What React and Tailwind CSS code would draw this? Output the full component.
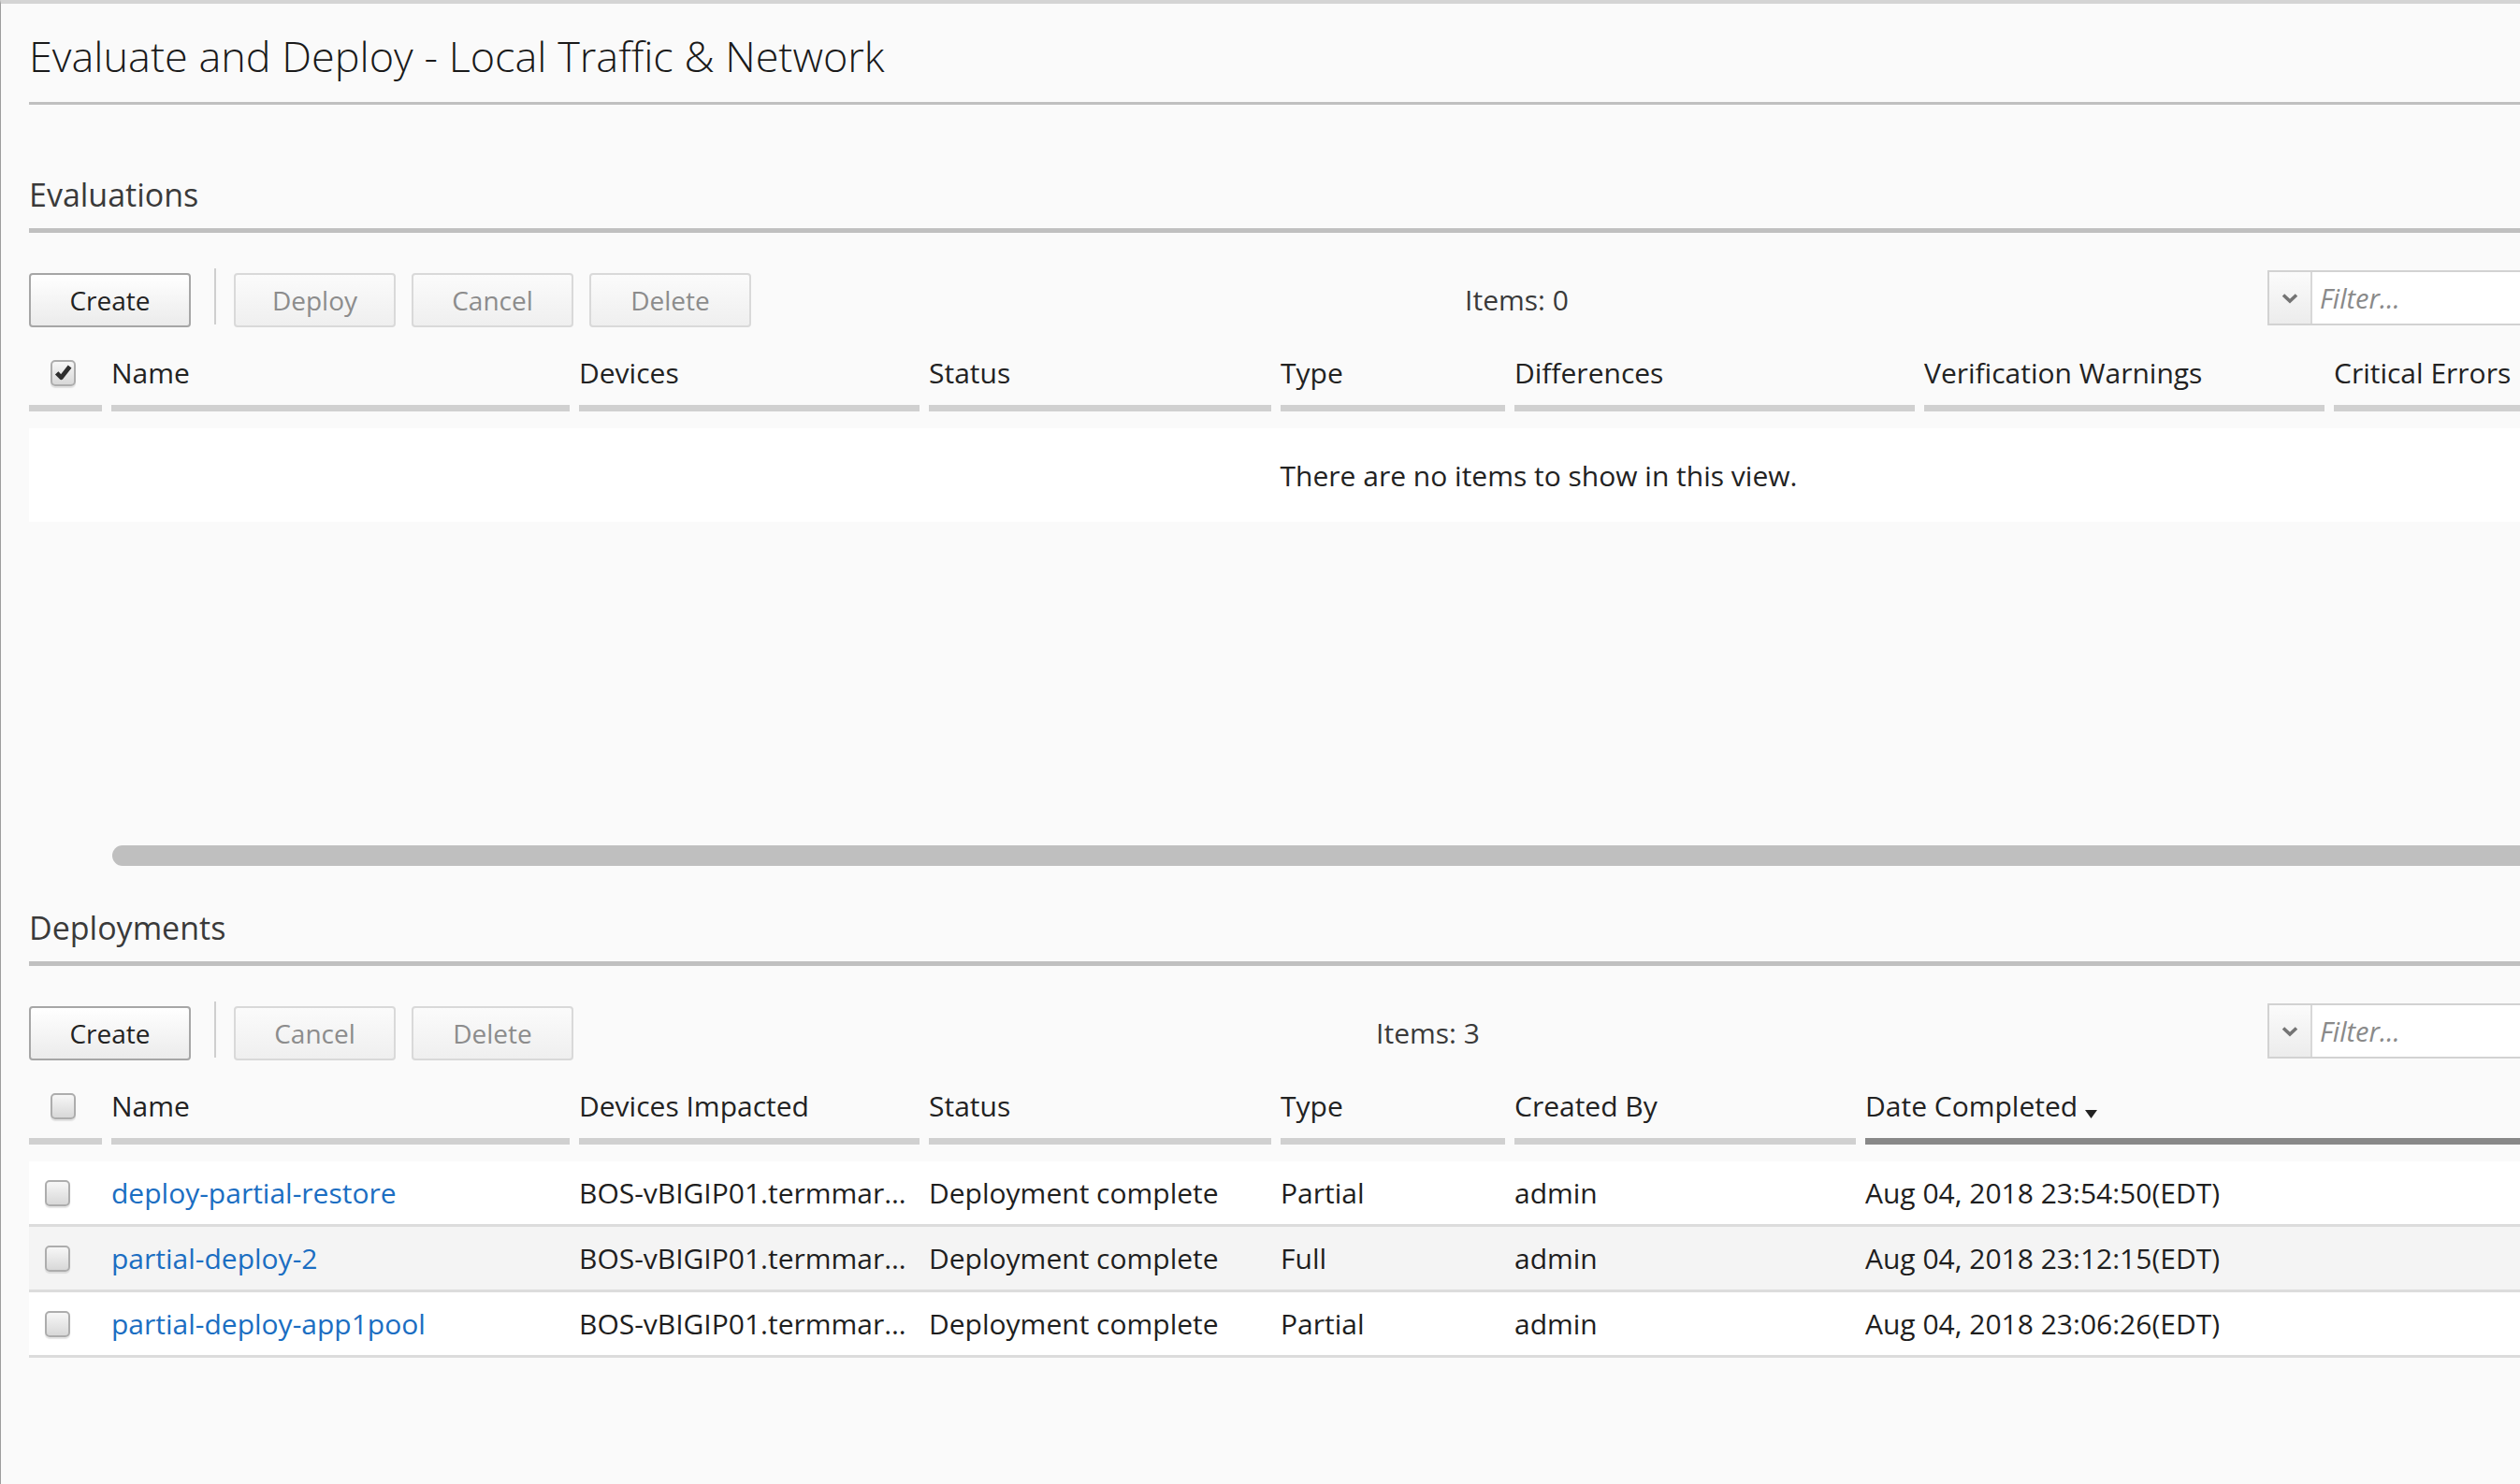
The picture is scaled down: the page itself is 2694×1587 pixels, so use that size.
import React from "react";

function Checkbox({ checked = false }) {
  return (
    <span className="relative block w-[27px] h-[28px] rounded-[5px] border-2 border-[#adadad] bg-gradient-to-b from-[#f7f7f7] to-[#d8d8d8] shadow-[0_2px_1px_rgba(0,0,0,0.10)]">
      {checked && (
        <svg viewBox="0 0 16 16" className="absolute left-[1px] top-[1px] w-[21px] h-[21px]">
          <path d="M2.8 8.2 L6.4 12 L13.4 3" fill="none" stroke="#2e2e2e" strokeWidth="3.6" strokeLinejoin="round" />
        </svg>
      )}
    </span>
  );
}

function Button({ label, disabled }) {
  return (
    <button
      className={
        disabled
          ? "mt-[5px] w-[173px] h-[58px] rounded-[4px] border-2 border-[#d9d9d9] bg-gradient-to-b from-[#fbfbfb] to-[#efefef] text-[28px] leading-none text-[#8c8c8c]"
          : "mt-[5px] w-[173px] h-[58px] rounded-[4px] border-2 border-[#a6a6a6] bg-gradient-to-b from-white to-[#ebebeb] text-[28px] leading-none text-[#222]"
      }
    >
      {label}
    </button>
  );
}

function Toolbar({ buttons, count }) {
  const [first, ...rest] = buttons;
  return (
    <div className="mt-[38px] flex items-start">
      <Button label={first} />
      <div className="ml-[25px] w-[2px] h-[60px] bg-[#cfcfcf]" />
      <div className="ml-[19px] flex gap-[17px]">
        {rest.map((b) => (
          <Button key={b} label={b} disabled />
        ))}
      </div>
      <div className="flex-1 mt-[5px] h-[58px] pl-[16px] flex items-center justify-center text-[30px] leading-none text-[#3a3a3a]">
        Items: {count}
      </div>
      <div className="mt-[2px] w-[835px] h-[59px] border-2 border-[#d2d2d2] flex bg-white">
        <div className="w-[46px] h-full border-r-2 border-[#d8d8d8] bg-gradient-to-b from-[#fbfbfb] to-[#ececec] flex items-center justify-center">
          <svg viewBox="0 0 18 12" className="w-[18px] h-[12px]">
            <path d="M2 2.5 L9 9 L16 2.5" fill="none" stroke="#747474" strokeWidth="3.6" />
          </svg>
        </div>
        <div className="flex-1 flex items-center pl-[8px] text-[29px] italic text-[#8a8a8a]">Filter...</div>
      </div>
    </div>
  );
}

const headCell =
  "h-[90px] pt-[15px] border-b-[7px] border-[#d0d0d0] flex items-center text-[30px] leading-none text-[#222] whitespace-nowrap";

function SectionTitle({ children, top }) {
  return (
    <h2
      className={`${top} pb-[13px] border-b-[5px] border-[#c0c0c0] text-[34px] leading-[46px] text-[#3a3a3a]`}
    >
      {children}
    </h2>
  );
}

const deployments = [
  { name: "deploy-partial-restore", type: "Partial", date: "Aug 04, 2018 23:54:50(EDT)", shade: "bg-white" },
  { name: "partial-deploy-2", type: "Full", date: "Aug 04, 2018 23:12:15(EDT)", shade: "bg-[#f4f4f4]" },
  { name: "partial-deploy-app1pool", type: "Partial", date: "Aug 04, 2018 23:06:26(EDT)", shade: "bg-white" },
];

export default function App() {
  const evalCols = "grid grid-cols-[78px_490px_364px_366px_240px_428px_428px_764px] gap-x-[10px]";
  const depCols = "grid grid-cols-[78px_490px_364px_366px_240px_365px_1265px] gap-x-[10px]";
  const rowCell = "flex items-center text-[30px] leading-none text-[#1e1e1e] whitespace-nowrap";

  return (
    <div className="w-[2694px] h-[1587px] overflow-hidden bg-[#fafafa] border-t-4 border-t-[#d4d4d4] border-l border-l-[#9d9d9d] font-['Open_Sans',sans-serif]">
      <div className="w-[3228px] ml-[30px]">
        <h1 className="pt-[24px] pb-[17px] border-b-[3px] border-[#c0c0c0] text-[45px] leading-[64px] font-light text-[#1a1a1a]">
          Evaluate and Deploy - Local Traffic &amp; Network
        </h1>

        {/* Evaluations */}
        <SectionTitle top="mt-[73px]">Evaluations</SectionTitle>
        <Toolbar buttons={["Create", "Deploy", "Cancel", "Delete"]} count={0} />
        <div className={evalCols}>
          <div className={`${headCell} pl-[23px]`}>
            <Checkbox checked />
          </div>
          <div className={headCell}>Name</div>
          <div className={headCell}>Devices</div>
          <div className={headCell}>Status</div>
          <div className={headCell}>Type</div>
          <div className={headCell}>Differences</div>
          <div className={headCell}>Verification Warnings</div>
          <div className={headCell}>Critical Errors</div>
        </div>
        <div className="mt-[18px] h-[100px] bg-white flex items-center justify-center text-[30px] text-[#222]">
          There are no items to show in this view.
        </div>
        <div className="mt-[346px] ml-[89px] h-[22px] rounded-full bg-[#bfbfbf]" />

        {/* Deployments */}
        <SectionTitle top="mt-[43px]">Deployments</SectionTitle>
        <Toolbar buttons={["Create", "Cancel", "Delete"]} count={3} />
        <div className={depCols}>
          <div className={`${headCell} pl-[23px]`}>
            <Checkbox />
          </div>
          <div className={headCell}>Name</div>
          <div className={headCell}>Devices Impacted</div>
          <div className={headCell}>Status</div>
          <div className={headCell}>Type</div>
          <div className={headCell}>Created By</div>
          <div className="h-[90px] pt-[15px] border-b-[7px] border-[#888] flex items-center text-[30px] leading-none text-[#222] whitespace-nowrap">
            Date Completed
            <svg viewBox="0 0 13 9" className="ml-[8px] mt-[16px] w-[13px] h-[9px]">
              <polygon points="0,0 13,0 6.5,9" fill="#222" />
            </svg>
          </div>
        </div>
        <div className="mt-[18px]">
          {deployments.map((d) => (
            <div key={d.name} className={`${depCols} h-[70px] border-b-[3px] border-[#dcdcdc] ${d.shade}`}>
              <div className="flex items-center pl-[17px]">
                <Checkbox />
              </div>
              <div className={rowCell}>
                <a href="#" className="text-[#1b6ec2]">{d.name}</a>
              </div>
              <div className={rowCell}>BOS-vBIGIP01.termmar…</div>
              <div className={rowCell}>Deployment complete</div>
              <div className={rowCell}>{d.type}</div>
              <div className={rowCell}>admin</div>
              <div className={rowCell}>{d.date}</div>
            </div>
          ))}
        </div>
      </div>
    </div>
  );
}
